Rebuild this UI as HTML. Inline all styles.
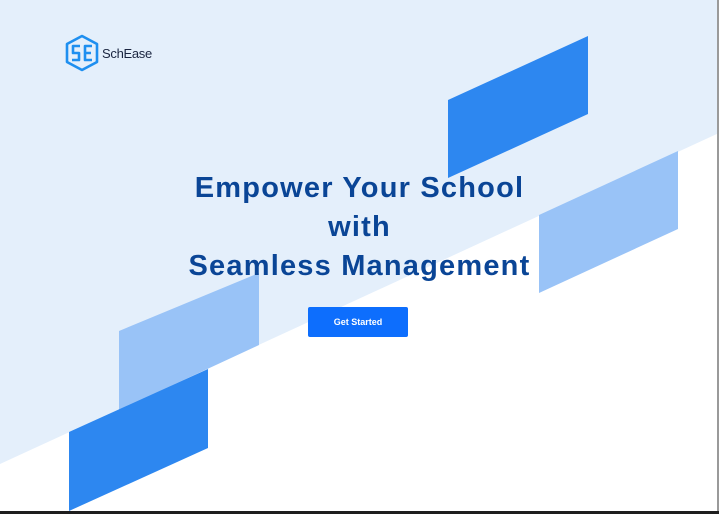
<!DOCTYPE html>
<html><head><meta charset="utf-8"><style>
html,body{margin:0;padding:0}
body{width:719px;height:514px;position:relative;overflow:hidden;background:#fff;font-family:"Liberation Sans",sans-serif}
svg.bg{position:absolute;left:0;top:0}
.h{position:absolute;left:0;width:719px;text-align:center;color:#0a4596;font-weight:bold;font-size:29px;line-height:39px;top:169px;margin:0;letter-spacing:1.2px}
.btn{position:absolute;left:308px;top:307px;width:100px;height:30px;background:#0d6efd;border-radius:2px;color:#fff;font-size:9px;font-weight:bold;line-height:30px;text-align:center}
.logo{position:absolute;left:102px;top:46px;font-size:13px;color:#1a2540;letter-spacing:-0.3px}
</style></head><body>
<svg class="bg" width="719" height="514" viewBox="0 0 719 514">
<polygon points="0,0 719,0 719,133 0,464" fill="#e4effb"/>
<polygon points="448,100 588,36 588,114 448,178" fill="#2d87f0"/>
<polygon points="539,215 678,151 678,229 539,293" fill="#99c3f7"/>
<polygon points="119,331 259,273 259,345 119,410" fill="#99c3f7"/>
<polygon points="69,432 208,369 208,448 69,511" fill="#2d87f0"/>
<rect x="717" y="0" width="2" height="514" fill="#9a9a9a"/>
<rect x="0" y="511" width="719" height="3" fill="#1e1e1e"/>
<g fill="none" stroke="#1e8ff0" stroke-width="2.6" stroke-linejoin="round">
<polygon points="82,36 97,44 97,62 82,70 67,62 67,44"/>
<path d="M80,46 H73 V53 H79 V60 H72"/>
<path d="M92,46 H85 V60 H92 M85,53 H91"/>
</g>
</svg>
<div class="logo">SchEase</div>
<p class="h">Empower Your School<br>with<br>Seamless Management</p>
<div class="btn">Get Started</div>
</body></html>
